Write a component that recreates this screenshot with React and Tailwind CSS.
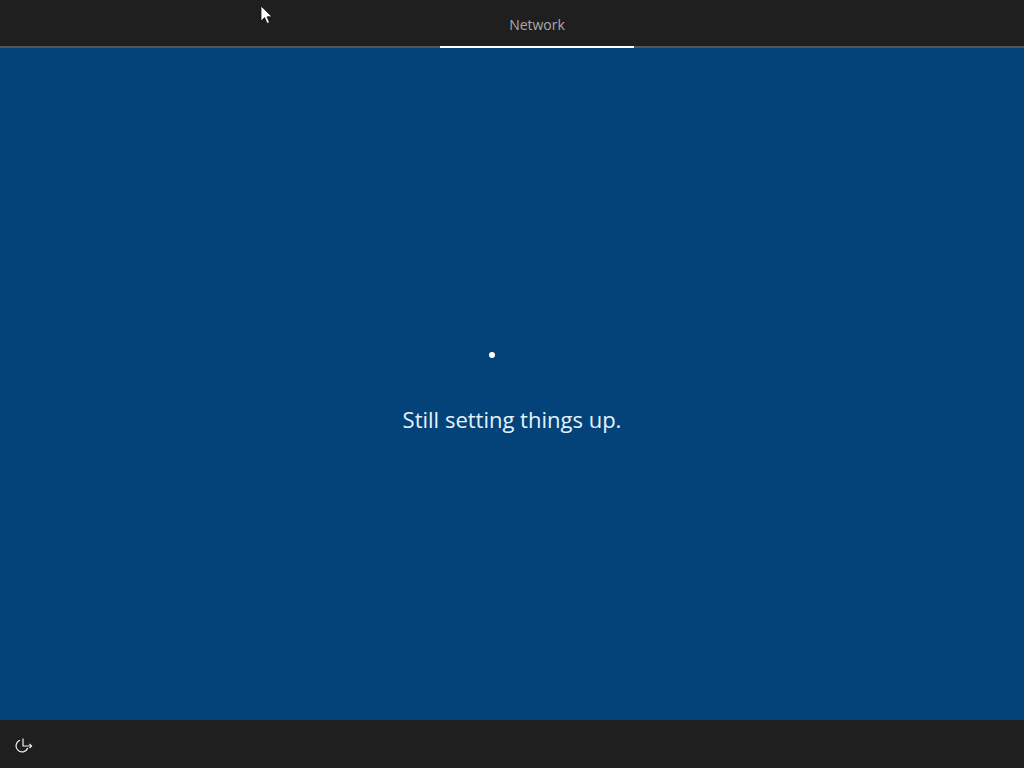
export default function App() {
  return (
    <div className="relative flex h-[768px] w-[1024px] flex-col overflow-hidden bg-[#03437a] font-['Open_Sans','Liberation_Sans',sans-serif]">
      <header className="flex h-[48px] shrink-0 justify-end border-b-2 border-[#555555] bg-[#1f1f1f] pr-[390px]">
        <div className="-mb-[2px] flex h-[48px] w-[194px] items-center justify-center border-b-2 border-white pt-[4px] text-[14px] leading-none text-[#ababab]">
          Network
        </div>
      </header>
      <main className="flex flex-1 flex-col items-center pt-[304px]">
        <div className="flex h-[6px] w-[226px] justify-start pl-[90px]">
          <span className="h-[6px] w-[6px] rounded-full bg-white" />
        </div>
        <p className="mt-[45px] text-[22px] leading-[32px] text-[#e6f1fa]">Still setting things up.</p>
      </main>
      <footer className="flex h-[48px] shrink-0 items-center bg-[#1f1f1f] pl-[15px] pt-[2px]">
        <svg width="18" height="16" viewBox="0 0 18 16" fill="none" stroke="#f0f0f0" strokeWidth="1.2" aria-hidden="true">
          <path d="M5 3.3a6 6 0 1 0 7.7 7.7" />
          <path d="M8 1.5V9h8.5" />
          <path d="M14.5 7l2 2-2 2" />
        </svg>
      </footer>
      <svg className="absolute left-[260px] top-[5px]" width="13" height="20" viewBox="0 0 13 20" aria-hidden="true">
        <path d="M1 1v15l3.6-3.4 2.5 5.8 2.4-1-2.5-5.6h5z" fill="#ffffff" stroke="#111111" strokeWidth="0.8" />
      </svg>
    </div>
  );
}
